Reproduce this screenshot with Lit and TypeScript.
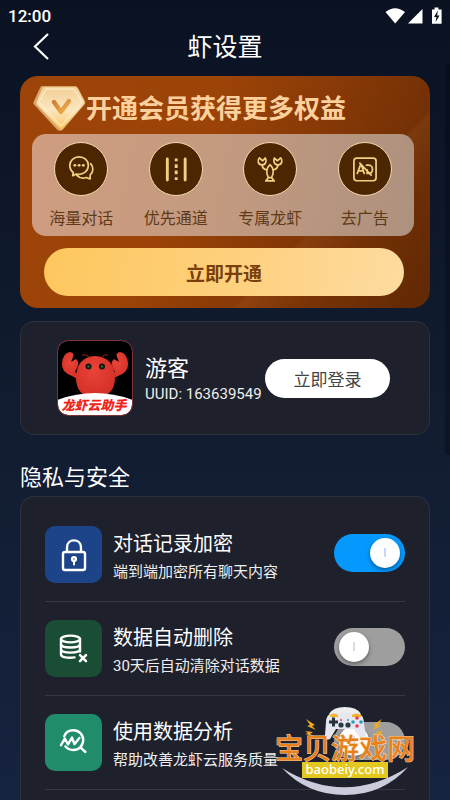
import { LitElement, html, css, svg, TemplateResult } from "lit";
import { customElement, property } from "lit/decorators.js";

const perkIcons: Record<string, TemplateResult> = {
  chat: svg`
    <path d="M19 30.6 L18.4 34 L22 32.2 C29 34 34.6 29 34.6 23.2 C34.6 18 30.2 14.4 25 14.4 C19.6 14.4 15.4 18.2 15.4 23 C15.4 26 16.6 28.8 19 30.6 Z"/>
    <path d="M37 21.4 C40.2 25 40 30 36.6 33 L36.4 37.4 L32.6 35.8 C28.6 37.2 24.8 36 22.4 33.4"/>
    <g class="solid"><circle cx="20.6" cy="23.2" r="1.5"/><circle cx="25" cy="23.2" r="1.5"/><circle cx="29.4" cy="23.2" r="1.5"/></g>`,
  lanes: svg`
    <path stroke-width="3" d="M18 16.5V38.5M36.5 16.5V38.5"/>
    <path stroke-width="3" stroke-linecap="butt" d="M27.2 16v3M27.2 22v4M27.2 28.5v4M27.2 35.5v3"/>`,
  lobster: svg`
    <path d="M16 15.5 C13.6 17.6 14.4 22.4 18.4 22.8 C22.6 23 24 18.6 22 15.6 L19.6 18.4 L18.2 17.6 Z"/>
    <path d="M31.6 15.6 C30 18.6 31.4 23 35.6 22.8 C39.6 22.4 40.4 17.6 38 15.5 L35.8 17.6 L34.4 18.4 Z"/>
    <path d="M18.8 23 C19 25.6 21 27.4 23.6 28M35.2 23 C35 25.6 33 27.4 30.4 28"/>
    <path d="M27 22.4 C22.8 26.4 23 31.6 25.4 36 H28.6 C31 31.6 31.2 26.4 27 22.4 Z"/>
    <path d="M25.2 36 L22.6 39.4 H31.4 L28.8 36"/>`,
  noads: svg`
    <rect x="15.5" y="15.8" width="23" height="23.4" rx="3"/>
    <path d="M19 31.600L22.200 23H23.400L26.200 31.600M20.200 29H25M29.200 28V31.600H31C36 31.600 36 23 31 23H28.600M21.600 21L33.400 33.400"/>`,
};

const settingIcons: Record<string, TemplateResult> = {
  lock: svg`
    <rect x="18" y="26" width="22" height="18" rx="2"/>
    <path d="M22 25.5V21.5C22 12 36 12 36 21.5V25.5"/>
    <circle cx="29" cy="33" r="1.9"/><path stroke-width="2" d="M29 35.5V38.500"/>`,
  database: svg`
    <ellipse cx="25.5" cy="19" rx="9.5" ry="3.4"/>
    <path d="M16 19V34.5C16 37.4 23 38.400 29.5 37.400M35 19V31.5"/>
    <path d="M16 24.5C16.6 28.4 34.4 28.4 35 24.500M16 29.500C16.6 33.6 34.4 33.6 35 29.500"/>
    <path stroke-width="2.600" d="M35 35.200L41 41.200M41 35.200L35 41.200"/>`,
  analysis: svg`
    <path d="M19.2 22.4C20.4 18.8 24 16.2 28.4 16.2C34 16.2 38.2 20.6 38.2 26C38.2 31.6 34 36 28.4 36C24.8 36 22 34.6 20.4 32.400M35.4 33.4L40.400 38"/>
    <path d="M16 31.2L19.8 24.6L23 30.4L27 23.600L29.4 30.2L34.4 24"/>`,
};

@customElement("status-bar")
export class StatusBar extends LitElement {
  static styles = css`
    :host {
      display: flex;
      align-items: center;
      justify-content: space-between;
      height: 32px;
      padding: 0 8px;
      font: 500 17px/32px Roboto, sans-serif;
    }
    .signals {
      display: flex;
      fill: #fff;
    }
  `;
  render() {
    return html`
      <span>12:00</span>
      <svg class="signals" width="57" height="18" viewBox="0 0 57 18" aria-hidden="true">
        <path d="M0.5 5Q10 -2.6 20 5L10.2 16.4Z" />
        <path d="M37.5 2V16.6H23Z" />
        <path d="M47 2.4H49.6V0.4H53.4V2.4H56.6V16.8H47Z" />
        <path fill="#0b1323" d="M52.8 3.6L49 10H51.4L50.6 15L54.6 8.6H52.2Z" />
      </svg>
    `;
  }
}

@customElement("vip-banner")
export class VipBanner extends LitElement {
  static styles = css`
    :host {
      display: block;
      box-sizing: border-box;
      padding: 8px 16px 12px 12px;
      border-radius: 18px;
      background:
        linear-gradient(135deg, transparent 69%, rgba(255, 200, 150, 0.06) 70%, transparent 80%),
        linear-gradient(115deg, #9c4409 0%, #9c4308 40%, #853806 65%, #5f2804 100%);
    }
    .head {
      display: flex;
      align-items: center;
      height: 50px;
    }
    .gem {
      flex: none;
    }
    h2 {
      margin: 0;
      color: #fcd09c;
      font-size: 26px;
      line-height: 32px;
      font-weight: 700;
      white-space: nowrap;
    }
    .perks {
      display: grid;
      grid-template-columns: repeat(4, 1fr);
      margin: 0;
      padding: 8px 2px 5px;
      list-style: none;
      border-radius: 14px;
      background: linear-gradient(100deg, #cf9d80, #c39a80 50%, #ad917e);
    }
    .perk {
      display: flex;
      flex-direction: column;
      align-items: center;
      gap: 11px;
      color: #5e3a18;
      font-size: 16px;
      line-height: 24px;
    }
    .disc {
      box-sizing: border-box;
      border: 1px solid #f3d9b0;
      border-radius: 50%;
      background: #4b2601;
      fill: none;
      stroke: #f3cf83;
      stroke-width: 1.8;
      stroke-linecap: round;
      stroke-linejoin: round;
    }
    .disc .solid {
      fill: #f3cf83;
      stroke: none;
    }
    .open {
      display: block;
      width: calc(100% - 22px);
      height: 48px;
      margin: 12px 10px 0 12px;
      padding: 0;
      border: 0;
      border-radius: 24px;
      background: linear-gradient(100deg, #fec75e, #fed07c 50%, #fedba0);
      color: #7b3f0b;
      font: inherit;
      font-size: 19px;
      font-weight: 700;
    }
  `;
  private perks = [
    ["chat", "海量对话"],
    ["lanes", "优先通道"],
    ["lobster", "专属龙虾"],
    ["noads", "去广告"],
  ];
  render() {
    return html`
      <div class="head">
        <svg class="gem" width="54" height="46" viewBox="0 0 54 46" aria-hidden="true">
          <defs>
            <linearGradient id="face" x1="0" y1="0" x2="0" y2="1">
              <stop offset="0" stop-color="#f3cf96" />
              <stop offset="0.55" stop-color="#fbe6bd" />
              <stop offset="1" stop-color="#fdc763" />
            </linearGradient>
            <linearGradient id="vee" x1="0" y1="0" x2="1" y2="1">
              <stop offset="0" stop-color="#c97e35" />
              <stop offset="1" stop-color="#f6b44c" />
            </linearGradient>
          </defs>
          <path fill="#d9a768" d="M10 0H43Q45 0 46 2L53 15Q54 17 52.6 18.6L31 43.4Q28 46 25 43.4L2 18.6Q0.4 17 2 15L8 2Q9 0 10 0Z" />
          <path fill="url(#face)" d="M12 1H43Q45 1 46 3L52 15Q53 17 51.6 18.6L31 42Q29 44 27 42L5 18.6Q4 17 5 15L10 3Q11 1 12 1Z" />
          <path fill="none" stroke="#fff3d6" stroke-width="1" d="M14 3H42L50 16L29 40L7 16Z" />
          <path fill="none" stroke="url(#vee)" stroke-width="4.4" stroke-linecap="round" stroke-linejoin="round" d="M22 16L29 26L37 15" />
        </svg>
        <h2>开通会员获得更多权益</h2>
      </div>
      <ul class="perks">
        ${this.perks.map(
          ([icon, label]) => html`<li class="perk">
            <svg class="disc" width="54" height="54" viewBox="0 0 54 54" aria-hidden="true">${perkIcons[icon]}</svg>
            <span>${label}</span>
          </li>`
        )}
      </ul>
      <button class="open" type="button">立即开通</button>
    `;
  }
}

@customElement("account-card")
export class AccountCard extends LitElement {
  static styles = css`
    :host {
      display: flex;
      align-items: center;
      box-sizing: border-box;
      height: 114px;
      padding: 0 39px 0 36px;
      border: 1px solid #2d313d;
      border-radius: 14px;
      background: #1e202c;
    }
    .avatar {
      flex: none;
      margin-right: 12px;
    }
    .slogan {
      font-size: 13px;
      font-weight: 900;
      font-style: italic;
      fill: #f0231c;
    }
    .who {
      flex: 1;
      min-width: 0;
      padding-top: 4px;
      white-space: nowrap;
    }
    .name {
      font-size: 22px;
      line-height: 28px;
    }
    .id {
      font-size: 15px;
      line-height: 22px;
      color: #eee;
    }
    .login {
      flex: none;
      width: 125px;
      height: 39px;
      padding: 0;
      border: 0;
      border-radius: 20px;
      background: #fff;
      color: #444;
      font: inherit;
      font-size: 17px;
    }
  `;
  render() {
    return html`
      <svg class="avatar" width="76" height="76" viewBox="0 0 76 76" role="img" aria-label="龙虾云助手">
        <defs>
          <clipPath id="tile"><rect x="1" y="1" width="74" height="74" rx="10" /></clipPath>
          <radialGradient id="shell" cx="0.45" cy="0.35" r="0.8">
            <stop offset="0" stop-color="#ea4438" />
            <stop offset="1" stop-color="#cc2a22" />
          </radialGradient>
        </defs>
        <g clip-path="url(#tile)">
          <rect width="76" height="76" />
          <g fill="url(#shell)">
            <path d="M22 40L15 36Q4 32 5 23Q6 13 13 12Q18 13 16 17L14 22L19 19Q23 22 20 28L18 32L24 36Z" />
            <path d="M54 40L61 36Q72 32 71 23Q70 13 63 12Q58 13 60 17L62 22L57 19Q53 22 56 28L58 32L52 36Z" />
            <path d="M38 16Q57 17 58 37Q58 57 38 58Q19 57 19 37Q20 17 38 16Z" />
          </g>
          <path fill="none" stroke="#962019" d="M32 17Q29 14 25 15M45 17Q47 14 51 15" />
          <circle cx="31.5" cy="26.5" r="3" fill="#111" /><circle cx="45" cy="26.5" r="3" fill="#111" />
          <circle cx="31.5" cy="26.5" r="1.2" fill="#286d2c" /><circle cx="45" cy="26.5" r="1.2" fill="#286d2c" />
          <path fill="#fff" d="M0 60Q38 46 76 60V76H0Z" />
          <text class="slogan" x="37" y="70" text-anchor="middle">龙虾云助手</text>
        </g>
        <rect x="0.5" y="0.5" width="75" height="75" rx="11" fill="none" stroke="#7b3239" />
      </svg>
      <div class="who">
        <div class="name">游客</div>
        <div class="id">UUID: 163639549</div>
      </div>
      <button class="login" type="button">立即登录</button>
    `;
  }
}

@customElement("setting-row")
export class SettingRow extends LitElement {
  @property() icon = "lock";
  @property() heading = "";
  @property() detail = "";
  @property({ type: Boolean }) on = false;

  static styles = css`
    :host {
      display: block;
    }
    .row {
      display: flex;
      align-items: center;
      box-sizing: border-box;
      height: 94px;
      border-bottom: 1px solid #383840;
    }
    .tile {
      flex: none;
      margin-right: 11px;
      border-radius: 10px;
      fill: none;
      stroke: #fff;
      stroke-width: 2.4;
      stroke-linecap: round;
      stroke-linejoin: round;
    }
    .lock {
      background: #1d4389;
    }
    .database {
      background: #1a4d35;
    }
    .analysis {
      background: #208c6b;
    }
    .text {
      flex: 1;
      padding-top: 6px;
      white-space: nowrap;
    }
    .heading,
    .detail {
      display: block;
      line-height: 28px;
    }
    .heading {
      font-size: 20px;
    }
    .detail {
      font-size: 15px;
      color: #eee;
    }
    .switch {
      appearance: none;
      flex: none;
      display: flex;
      align-items: center;
      box-sizing: border-box;
      width: 71px;
      height: 38px;
      margin: 0 0 4px;
      padding: 0 5px;
      border-radius: 19px;
      background: #9e9e9e;
    }
    .switch::before {
      content: "";
      width: 30px;
      height: 30px;
      border-radius: 50%;
      background: linear-gradient(#ddd, #ddd) center / 2px 9px no-repeat #fff;
      box-shadow: 0 2px 4px rgba(0, 0, 0, 0.4);
    }
    .switch:checked {
      justify-content: flex-end;
      background: #0599fe;
    }
    .switch:checked::before {
      background: linear-gradient(#c5d8fb, #c5d8fb) center / 2px 9px no-repeat #fff;
    }
  `;
  render() {
    return html`
      <div class="row">
        <svg class="tile ${this.icon}" width="57" height="57" viewBox="0 0 57 57" aria-hidden="true">
          ${settingIcons[this.icon]}
        </svg>
        <label class="text" for="toggle">
          <span class="heading">${this.heading}</span>
          <span class="detail">${this.detail}</span>
        </label>
        <input class="switch" id="toggle" type="checkbox" role="switch" .checked=${this.on} />
      </div>
    `;
  }
}

@customElement("site-mark")
export class SiteMark extends LitElement {
  static styles = css`
    :host {
      display: block;
    }
    svg {
      display: block;
    }
    .name {
      font-size: 28px;
      font-weight: 500;
      fill: #e8801c;
      stroke: #fbdcb0;
      stroke-width: 1;
      paint-order: stroke;
    }
    .domain {
      font-family: "Noto Sans", sans-serif;
      font-size: 13px;
      font-weight: 500;
      fill: #fff;
    }
  `;
  render() {
    return html`
      <svg width="144" height="92" viewBox="0 0 144 92" role="img" aria-label="宝贝游戏网 baobeiy.com">
        <path fill="#cbcbdc" d="M7 63Q70 102 133 62Q108 90 70 90Q32 90 7 63Z" />
        <g fill="#f5a91d">
          <path d="M31 14L40 20L37 21L41 25L32 21L35 20ZM30 26L38 27L35 29L39 31L30 29L33 28Z" />
          <path d="M107 14L98 20L101 21L97 25L106 21L103 20ZM108 26L100 27L103 29L99 31L108 29L105 28Z" />
        </g>
        <path fill="#ededed" d="M54 9Q58 2 70 2Q82 2 86 9Z" />
        <path fill="#e6e6ee" d="M57 8H83Q89 10 89 19L91 30Q91 36 86 34L79 24H61L55 34Q49 36 50 30L51 17Q51 10 57 8Z" />
        <path fill="#f5b428" d="M55 10Q58 7 63 10V12H55ZM77 10Q82 7 86 10V12H77Z" />
        <path stroke="#27323d" stroke-width="3" d="M54 17H63M58.5 12.5V21.5" />
        <g fill="#263b46"><circle cx="66" cy="20" r="2.6" /><circle cx="73" cy="20" r="2.6" /></g>
        <g fill="#dd3e55"><circle cx="82" cy="13" r="1.8" /><circle cx="82" cy="21" r="1.8" /><circle cx="66" cy="15" r="1" /></g>
        <g fill="#2f9aba"><circle cx="78" cy="17" r="1.8" /><circle cx="86" cy="17" r="1.8" /><circle cx="73" cy="15" r="1" /></g>
        <rect x="27" y="57" width="86" height="16" fill="#e3c81f" />
        <text class="name" x="70" y="54" text-anchor="middle">宝贝游戏网</text>
        <text class="domain" x="70" y="69" text-anchor="middle">baobeiy.com</text>
      </svg>
    `;
  }
}

@customElement("app-root")
export class AppRoot extends LitElement {
  static styles = css`
    :host {
      position: relative;
      display: flex;
      flex-direction: column;
      height: 100vh;
      overflow: hidden;
      background: linear-gradient(#0a1222, #111c30 50%, #16233f);
      color: #fff;
      font-family: Roboto, "Noto Sans CJK SC", sans-serif;
    }
    .nav {
      display: grid;
      grid-template-columns: 60px 1fr 60px;
      align-items: center;
      flex: none;
      height: 32px;
    }
    .back {
      display: flex;
      justify-content: flex-end;
      padding: 0 11px 4px 0;
      border: 0;
      background: none;
    }
    h1 {
      margin: 0;
      font-size: 25px;
      line-height: 32px;
      font-weight: 400;
      text-align: center;
    }
    main {
      flex: 1;
      display: flex;
      flex-direction: column;
      min-height: 0;
      padding: 12px 20px 0;
    }
    vip-banner,
    account-card {
      flex: none;
      margin-bottom: 13px;
    }
    .section {
      flex: none;
      margin: 14px 0 2px;
      font-size: 22px;
      line-height: 32px;
      font-weight: 400;
    }
    .group {
      flex: 1;
      padding: 11px 24px 0;
      border: 1px solid #2d313d;
      border-bottom: 0;
      border-radius: 14px 14px 0 0;
      background: #1e202c;
    }
    .scrollbar {
      position: absolute;
      top: 64px;
      right: 0;
      width: 5px;
      height: 391px;
      background: rgba(0, 0, 0, 0.25);
    }
    .mark {
      position: absolute;
      right: 31px;
      bottom: 3px;
      pointer-events: none;
    }
  `;
  render() {
    return html`
      <status-bar></status-bar>
      <header class="nav">
        <button class="back" type="button" aria-label="返回">
          <svg width="16" height="28" viewBox="0 0 16 28" fill="none" stroke="#fff" stroke-width="2.2">
            <path d="M15 2L2 14.5L15 27" />
          </svg>
        </button>
        <h1>虾设置</h1>
      </header>
      <main>
        <vip-banner></vip-banner>
        <account-card></account-card>
        <h2 class="section">隐私与安全</h2>
        <section class="group">
          <setting-row icon="lock" heading="对话记录加密" detail="端到端加密所有聊天内容" on></setting-row>
          <setting-row icon="database" heading="数据自动删除" detail="30天后自动清除对话数据"></setting-row>
          <setting-row icon="analysis" heading="使用数据分析" detail="帮助改善龙虾云服务质量"></setting-row>
        </section>
      </main>
      <div class="scrollbar"></div>
      <site-mark class="mark"></site-mark>
    `;
  }
}
